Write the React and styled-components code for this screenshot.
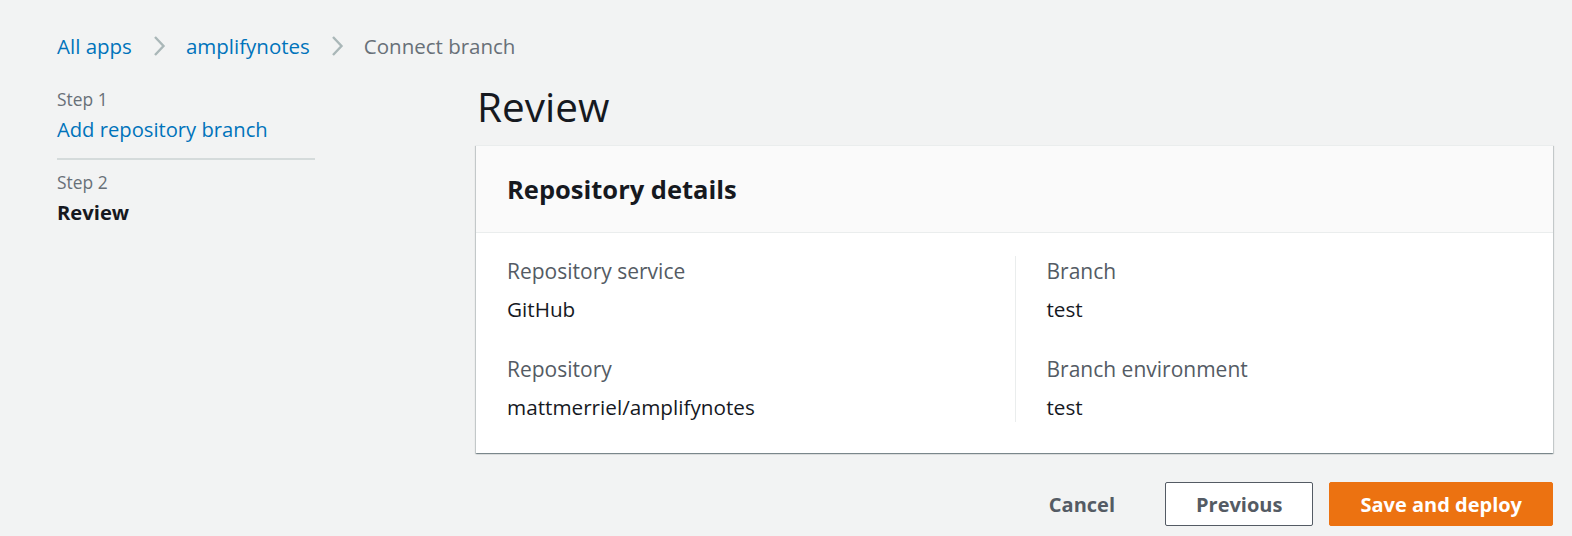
import React from 'react'
import styled, { createGlobalStyle } from 'styled-components'

const GlobalStyle = createGlobalStyle`
  body {
    margin: 0;
    background: #f2f3f3;
    font-family: 'Open Sans', 'Noto Sans', sans-serif;
    color: #16191f;
  }
`

const Page = styled.div`
  padding: 0 19px 0 57px;
  min-height: 536px;
  box-sizing: border-box;
`

const Breadcrumbs = styled.nav`
  display: flex;
  align-items: center;
  height: 46px;
  padding-top: 23px;
  font-size: 20.5px;
  gap: 20px;
`

const Crumb = styled.a`
  color: ${props => (props.current ? '#687078' : '#0073bb')};
  text-decoration: none;
`

const Chevron = () => (
  <svg width="14" height="22" viewBox="0 0 14 22">
    <path d="M3 2 L11.5 11 L3 20" fill="none" stroke="#aab7b8" strokeWidth="2.4" />
  </svg>
)

const Layout = styled.div`
  display: flex;
  align-items: flex-start;
`

const Nav = styled.div`
  width: 258px;
  flex-shrink: 0;
  padding-top: 18px;
`

const StepBlock = styled.div`
  padding-bottom: ${props => (props.last ? '0' : '11px')};
  border-bottom: ${props => (props.last ? 'none' : '2px solid #d5dbdb')};
  margin-bottom: 10px;
`

const StepLabel = styled.div`
  color: #687078;
  font-size: 17.4px;
  line-height: 24px;
`

const StepTitle = styled.div`
  font-size: 20.2px;
  line-height: 36px;
  color: ${props => (props.active ? '#16191f' : '#0073bb')};
  font-weight: ${props => (props.active ? 700 : 400)};
`

const Main = styled.div`
  flex: 1;
  margin-left: 161px;
`

const Heading = styled.h1`
  margin: 0;
  font-size: 40.5px;
  font-weight: 400;
  line-height: 52px;
  padding: 12px 0 12px 1px;
`

const Card = styled.section`
  background: #fff;
  box-shadow: 0 1px 1px 0 rgba(0, 28, 36, 0.3), 1px 1px 1px 0 rgba(0, 28, 36, 0.15),
    -1px 1px 1px 0 rgba(0, 28, 36, 0.15);
  border-top: 1px solid #eaeded;
`

const CardHeader = styled.div`
  background: #fafafa;
  border-bottom: 1px solid #eaeded;
  padding: 0 31px;
  height: 86px;
  display: flex;
  align-items: center;
`

const CardTitle = styled.h2`
  margin: 0;
  font-size: 25.5px;
  font-weight: 700;
`

const CardBody = styled.div`
  display: grid;
  grid-template-columns: 1fr 1fr;
  padding: 23px 31px 31px;
`

const Column = styled.div`
  display: flex;
  flex-direction: column;
  gap: 30px;
  ${props => props.divided && `
    border-left: 1px solid #eaeded;
    padding-left: 31px;
  `}
`

const Field = styled.div`
  display: flex;
  flex-direction: column;
  gap: 8px;
`

const Label = styled.div`
  color: #545b64;
  font-size: 21px;
  line-height: 30px;
`

const Value = styled.div`
  color: #16191f;
  font-size: 20.7px;
  line-height: 30px;
`

const Actions = styled.div`
  display: flex;
  justify-content: flex-end;
  align-items: center;
  gap: 16px;
  margin-top: 29px;
`

const Button = styled.button`
  font-family: inherit;
  font-size: 20px;
  font-weight: 700;
  height: 44px;
  border-radius: 2px;
  cursor: pointer;
  padding: 0 ${props => (props.variant === 'link' ? '33px' : '30px')};
  color: ${props => (props.variant === 'primary' ? '#fff' : '#545b64')};
  background: ${props =>
    props.variant === 'primary' ? '#ec7211' : props.variant === 'normal' ? '#fff' : 'transparent'};
  border: 1px solid
    ${props =>
      props.variant === 'primary' ? '#ec7211' : props.variant === 'normal' ? '#545b64' : 'transparent'};
`

const Detail = ({ label, value }) => (
  <Field>
    <Label>{label}</Label>
    <Value>{value}</Value>
  </Field>
)

const App = () => (
  <>
    <GlobalStyle />
    <Page>
      <Breadcrumbs>
        <Crumb href="#">All apps</Crumb>
        <Chevron />
        <Crumb href="#">amplifynotes</Crumb>
        <Chevron />
        <Crumb current>Connect branch</Crumb>
      </Breadcrumbs>
      <Layout>
        <Nav>
          <StepBlock>
            <StepLabel>Step 1</StepLabel>
            <StepTitle>Add repository branch</StepTitle>
          </StepBlock>
          <StepBlock last>
            <StepLabel>Step 2</StepLabel>
            <StepTitle active>Review</StepTitle>
          </StepBlock>
        </Nav>
        <Main>
          <Heading>Review</Heading>
          <Card>
            <CardHeader>
              <CardTitle>Repository details</CardTitle>
            </CardHeader>
            <CardBody>
              <Column>
                <Detail label="Repository service" value="GitHub" />
                <Detail label="Repository" value="mattmerriel/amplifynotes" />
              </Column>
              <Column divided>
                <Detail label="Branch" value="test" />
                <Detail label="Branch environment" value="test" />
              </Column>
            </CardBody>
          </Card>
          <Actions>
            <Button variant="link">Cancel</Button>
            <Button variant="normal">Previous</Button>
            <Button variant="primary">Save and deploy</Button>
          </Actions>
        </Main>
      </Layout>
    </Page>
  </>
)

export default App
